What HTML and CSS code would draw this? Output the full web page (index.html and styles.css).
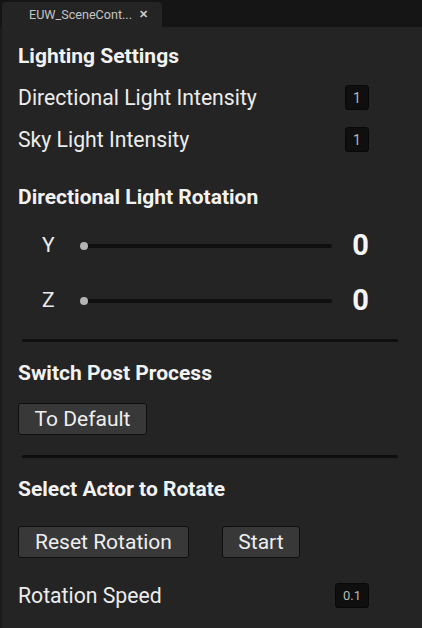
FILE: index.html
```html
<!DOCTYPE html>
<html>
<head>
<meta charset="utf-8">
<link rel="stylesheet" href="styles.css">
</head>
<body>
<div class="window">
  <div class="tabbar">
    <div class="tab"><span class="tab-title">EUW_SceneCont...</span><span class="tab-close">✕</span></div>
  </div>
  <div class="panel">
    <h2 class="heading h-first">Lighting Settings</h2>
    <div class="row r-prop">
      <span class="label">Directional Light Intensity</span>
      <span class="numbox">1</span>
    </div>
    <div class="row r-prop">
      <span class="label">Sky Light Intensity</span>
      <span class="numbox">1</span>
    </div>
    <h2 class="heading h-rot">Directional Light Rotation</h2>
    <div class="slider-row sr-1">
      <span class="axis">Y</span>
      <div class="slider"><div class="track"></div><div class="thumb"></div></div>
      <span class="value">0</span>
    </div>
    <div class="slider-row sr-2">
      <span class="axis">Z</span>
      <div class="slider"><div class="track"></div><div class="thumb"></div></div>
      <span class="value">0</span>
    </div>
    <div class="sep sep-1"></div>
    <h2 class="heading h-post">Switch Post Process</h2>
    <div class="btn-row br-1"><button class="btn btn-default">To Default</button></div>
    <div class="sep sep-2"></div>
    <h2 class="heading h-actor">Select Actor to Rotate</h2>
    <div class="btn-row br-2">
      <button class="btn btn-reset">Reset Rotation</button>
      <button class="btn btn-start">Start</button>
    </div>
    <div class="row r-speed">
      <span class="label">Rotation Speed</span>
      <span class="numbox numbox-wide">0.1</span>
    </div>
  </div>
</div>
</body>
</html>
```
FILE: styles.css
```css
html, body {
  margin: 0;
  padding: 0;
  background: #151515;
}
body {
  font-family: Roboto, "Noto Sans", sans-serif;
  color: #f0f0f0;
}
.window {
  width: 422px;
  height: 628px;
  display: flex;
  flex-direction: column;
  overflow: hidden;
}
.tabbar {
  height: 27px;
  background: #151515;
  display: flex;
  align-items: flex-end;
  padding-left: 2px;
  flex-shrink: 0;
}
.tab {
  width: 160px;
  height: 25px;
  background: #242424;
  border-radius: 4px 4px 0 0;
  display: flex;
  align-items: center;
  box-sizing: border-box;
  padding-left: 27px;
  gap: 7px;
}
.tab-title {
  font-size: 12.6px;
  color: #c4c4c4;
}
.tab-close {
  font-size: 11px;
  color: #c8c8c8;
  font-weight: bold;
}
.panel {
  flex: 1;
  background: #242424;
  border-left: 2px solid #1b1b1b;
  padding: 0 24px 0 16px;
  display: flex;
  flex-direction: column;
}
.heading {
  margin: 0;
  font-size: 21px;
  font-weight: 700;
  line-height: 24px;
  color: #f2f2f2;
}
.h-first { margin-top: 17px; }
.row {
  display: flex;
  align-items: center;
  justify-content: space-between;
  height: 25px;
  padding-right: 29px;
}
.r-prop { margin-top: 17px; }
.label {
  font-size: 21.2px;
  color: #ececec;
}
.numbox {
  width: 24px;
  height: 25px;
  box-sizing: border-box;
  background: #0f0f0f;
  border: 1px solid #080808;
  border-radius: 3px;
  display: flex;
  align-items: center;
  justify-content: center;
  font-size: 14px;
  color: #b8b8b8;
}
.numbox-wide { width: 34px; font-size: 13px; }
.h-rot { margin-top: 33px; }
.slider-row {
  display: flex;
  align-items: center;
  height: 30px;
  padding-left: 24px;
  padding-right: 29px;
}
.sr-1 { margin-top: 21px; }
.sr-2 { margin-top: 25px; }
.axis {
  width: 38px;
  font-size: 21px;
  color: #ececec;
}
.slider {
  position: relative;
  width: 252px;
  height: 10px;
  display: flex;
  align-items: center;
  margin-top: 2px;
}
.track {
  width: 100%;
  height: 4px;
  background: #0f0f0f;
  border-radius: 2px;
}
.thumb {
  position: absolute;
  left: 0;
  top: 1px;
  width: 8px;
  height: 8px;
  border-radius: 50%;
  background: #b4b4b4;
}
.value {
  margin-left: auto;
  font-size: 29px;
  font-weight: 700;
  color: #f5f5f5;
}
.sep {
  height: 3px;
  background: #0f0f0f;
  border-radius: 2px;
  margin-left: 4px;
}
.sep-1 { margin-top: 24px; }
.h-post { margin-top: 19px; }
.btn-row {
  display: flex;
  gap: 33px;
}
.br-1 { margin-top: 18px; }
.btn {
  font-family: Roboto, "Noto Sans", sans-serif;
  font-size: 21px;
  color: #eeeeee;
  background: #383838;
  border: 1px solid #0f0f0f;
  border-radius: 3px;
  height: 32px;
  padding: 0;
  margin: 0;
  box-sizing: border-box;
}
.btn-default { width: 129px; }
.sep-2 { margin-top: 20px; }
.h-actor { margin-top: 19px; }
.br-2 { margin-top: 25px; }
.btn-reset { width: 171px; }
.btn-start { width: 78px; }
.r-speed { margin-top: 25px; }
```
